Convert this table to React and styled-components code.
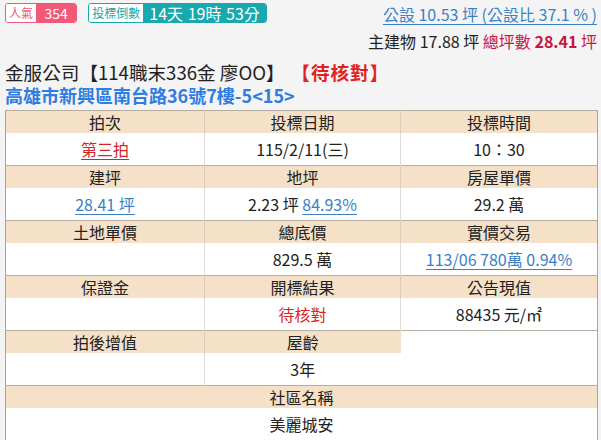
import React from 'react';
import styled, { createGlobalStyle } from 'styled-components';

const GlobalStyle = createGlobalStyle`
  html, body {
    margin: 0;
    padding: 0;
    background: #f4f4f4;
  }
  body {
    font-family: "Noto Sans CJK TC", "Noto Sans", sans-serif;
    color: #222;
  }
`;

const Page = styled.div`
  width: 601px;
  height: 440px;
  padding: 3px 4px 0 5px;
  box-sizing: border-box;
  overflow: hidden;
`;

const TopBar = styled.div`
  display: flex;
  justify-content: space-between;
  align-items: flex-start;
  height: 57px;
`;

const Badges = styled.div`
  display: flex;
  gap: 11px;
`;

const Badge = styled.div`
  display: flex;
  height: 20px;
  border: 1px solid ${(props) => props.color};
  border-radius: 3px;
  box-sizing: border-box;
`;

const BadgeLabel = styled.span`
  display: flex;
  align-items: center;
  padding: 0 3px;
  background: #fff;
  border-radius: 2px 0 0 2px;
  color: ${(props) => props.color};
  font-size: 12px;
  line-height: 16px;
`;

const BadgeValue = styled.span`
  display: flex;
  align-items: center;
  padding: 0 ${(props) => (props.large ? 6 : 8.5)}px;
  background: ${(props) => props.color};
  border-radius: 0 2px 2px 0;
  color: #fff;
  font-size: ${(props) => (props.large ? 16 : 14)}px;
  line-height: 16px;
  word-spacing: 1px;
`;

const AreaInfo = styled.div`
  display: flex;
  flex-direction: column;
  align-items: flex-end;
  font-size: 16px;
`;

const AreaLink = styled.a`
  color: #3b80c6;
  text-decoration: underline;
  text-underline-offset: 3px;
  line-height: 22px;
`;

const AreaLine = styled.div`
  margin-top: 5px;
  line-height: 22px;
  color: #222;
`;

const Total = styled.span`
  color: #c9163f;
  b {
    font-weight: 700;
  }
`;

const Title = styled.div`
  font-size: 18.6px;
  line-height: 24px;
  height: 24px;
  color: #222;
  white-space: nowrap;
`;

const Status = styled.span`
  margin-left: 16px;
  color: #e0231e;
  font-weight: 700;
  font-size: 18.6px;
  letter-spacing: 1px;
`;

const Address = styled.div`
  font-size: 18px;
  line-height: 23px;
  height: 23px;
  font-weight: 700;
  color: #2f7de0;
`;

const Table = styled.table`
  margin-top: 3px;
  width: 592px;
  table-layout: fixed;
  border-collapse: collapse;
  border: 1px solid #a9a39c;
  font-size: 16px;
  background: #fff;
`;

const HeadRow = styled.tr`
  background: #f5e0c8;
  border-top: 1px solid #b5aca2;
  th {
    height: 22px;
    padding: 0;
    font-weight: 400;
    text-align: center;
    border-left: 1px solid #dccbb5;
    line-height: 22px;
  }
  th:first-child {
    border-left: none;
  }
`;

const DataRow = styled.tr`
  td {
    height: 32px;
    padding: 0;
    text-align: center;
    border-left: 1px solid #e1dbd3;
    background: #fff;
  }
  td:first-child {
    border-left: none;
  }
`;

const Blank = styled.td`
  background: #fff;
`;

const Link = styled.a`
  color: ${(props) => (props.red ? '#d2252b' : '#3b80c6')};
  text-decoration: underline;
  text-underline-offset: 3px;
`;

const Red = styled.span`
  color: #e0231e;
`;

const App = () => {
  return (
    <>
      <GlobalStyle />
      <Page>
        <TopBar>
          <Badges>
            <Badge color="#f05a78">
              <BadgeLabel color="#f05a78">人氣</BadgeLabel>
              <BadgeValue color="#f05a78">354</BadgeValue>
            </Badge>
            <Badge color="#17a9ad">
              <BadgeLabel color="#17a9ad">投標倒數</BadgeLabel>
              <BadgeValue color="#17a9ad" large>
                14天 19時 53分
              </BadgeValue>
            </Badge>
          </Badges>
          <AreaInfo>
            <AreaLink>公設 10.53 坪 (公設比 37.1 % )</AreaLink>
            <AreaLine>
              主建物 17.88 坪{' '}
              <Total>
                總坪數 <b>28.41</b> 坪
              </Total>
            </AreaLine>
          </AreaInfo>
        </TopBar>
        <Title>
          金服公司【114職末336金 廖OO】<Status>【待核對】</Status>
        </Title>
        <Address>高雄市新興區南台路36號7樓-5&lt;15&gt;</Address>
        <Table>
          <colgroup>
            <col style={{ width: 199 }} />
            <col style={{ width: 196 }} />
            <col style={{ width: 197 }} />
          </colgroup>
          <tbody>
            <HeadRow>
              <th>拍次</th>
              <th>投標日期</th>
              <th>投標時間</th>
            </HeadRow>
            <DataRow>
              <td>
                <Link red>第三拍</Link>
              </td>
              <td>115/2/11(三)</td>
              <td>10：30</td>
            </DataRow>
            <HeadRow>
              <th>建坪</th>
              <th>地坪</th>
              <th>房屋單價</th>
            </HeadRow>
            <DataRow>
              <td>
                <Link>28.41 坪</Link>
              </td>
              <td>
                2.23 坪 <Link>84.93%</Link>
              </td>
              <td>29.2 萬</td>
            </DataRow>
            <HeadRow>
              <th>土地單價</th>
              <th>總底價</th>
              <th>實價交易</th>
            </HeadRow>
            <DataRow>
              <td></td>
              <td>829.5 萬</td>
              <td>
                <Link>113/06 780萬 0.94%</Link>
              </td>
            </DataRow>
            <HeadRow>
              <th>保證金</th>
              <th>開標結果</th>
              <th>公告現值</th>
            </HeadRow>
            <DataRow>
              <td></td>
              <td>
                <Red>待核對</Red>
              </td>
              <td>88435 元/㎡</td>
            </DataRow>
            <HeadRow>
              <th>拍後增值</th>
              <th>屋齡</th>
              <Blank rowSpan={2} />
            </HeadRow>
            <DataRow>
              <td></td>
              <td>3年</td>
            </DataRow>
            <HeadRow>
              <th colSpan={3}>社區名稱</th>
            </HeadRow>
            <DataRow>
              <td colSpan={3}>美麗城安</td>
            </DataRow>
          </tbody>
        </Table>
      </Page>
    </>
  );
};

export default App;
